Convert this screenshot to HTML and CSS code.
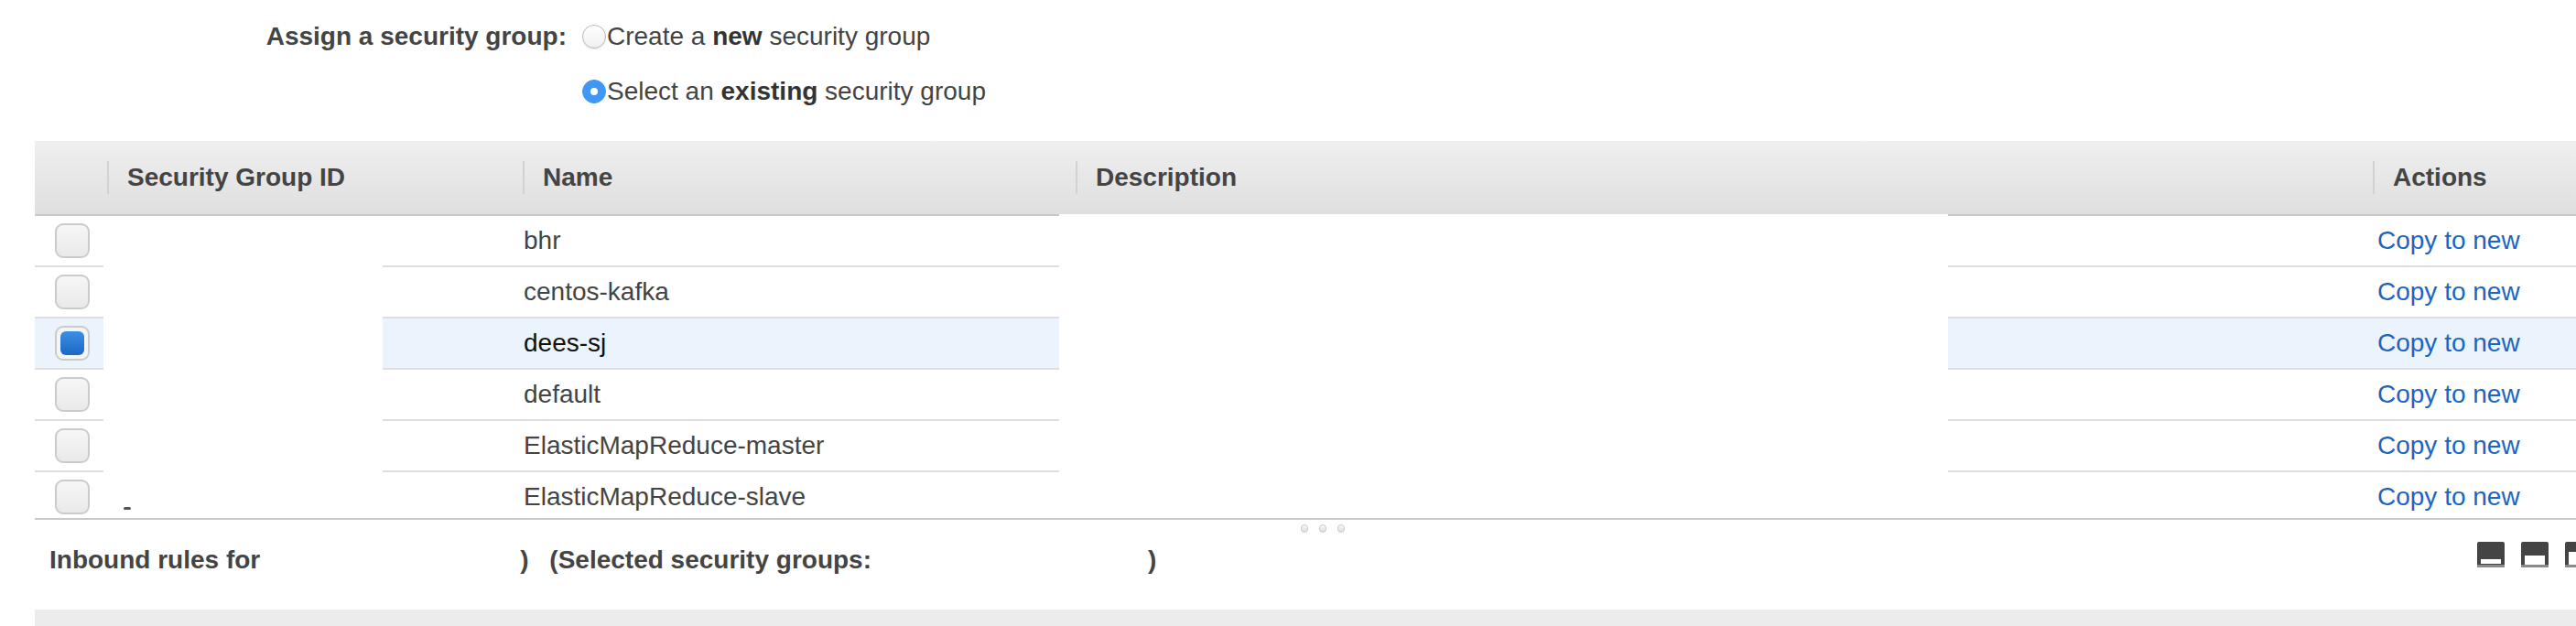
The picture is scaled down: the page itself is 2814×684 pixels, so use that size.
FILE: index.html
```html
<!DOCTYPE html>
<html lang="en">
<head>
<meta charset="utf-8">
<title>Configure Security Group</title>
<link rel="stylesheet" href="styles.css">
</head>
<body>
<div class="page">
  <div class="assign">
    <div class="assign-label">Assign a security group:</div>
    <div class="assign-options">
      <label class="radio-row"><span class="radio"></span><span class="radio-text">Create a <b>new</b> security group</span></label>
      <label class="radio-row"><span class="radio checked"></span><span class="radio-text">Select an <b>existing</b> security group</span></label>
    </div>
  </div>

  <div class="sg-table">
    <div class="thead">
      <div class="th"></div>
      <div class="th"><span class="th-label">Security Group ID</span></div>
      <div class="th"><span class="th-label">Name</span></div>
      <div class="th"><span class="th-label">Description</span></div>
      <div class="th"><span class="th-label">Actions</span></div>
    </div>
    <div class="tbody">
      <div class="tr">
        <div class="td td-check"><span class="cb"></span></div>
        <div class="td"></div>
        <div class="td td-name">bhr</div>
        <div class="td"></div>
        <div class="td td-action"><a class="link">Copy to new</a></div>
      </div>
      <div class="tr">
        <div class="td td-check"><span class="cb"></span></div>
        <div class="td"></div>
        <div class="td td-name">centos-kafka</div>
        <div class="td"></div>
        <div class="td td-action"><a class="link">Copy to new</a></div>
      </div>
      <div class="tr selected">
        <div class="td td-check"><span class="cb checked"></span></div>
        <div class="td"></div>
        <div class="td td-name">dees-sj</div>
        <div class="td"></div>
        <div class="td td-action"><a class="link">Copy to new</a></div>
      </div>
      <div class="tr">
        <div class="td td-check"><span class="cb"></span></div>
        <div class="td"></div>
        <div class="td td-name">default</div>
        <div class="td"></div>
        <div class="td td-action"><a class="link">Copy to new</a></div>
      </div>
      <div class="tr">
        <div class="td td-check"><span class="cb"></span></div>
        <div class="td"></div>
        <div class="td td-name">ElasticMapReduce-master</div>
        <div class="td"></div>
        <div class="td td-action"><a class="link">Copy to new</a></div>
      </div>
      <div class="tr">
        <div class="td td-check"><span class="cb"></span></div>
        <div class="td"></div>
        <div class="td td-name">ElasticMapReduce-slave</div>
        <div class="td"></div>
        <div class="td td-action"><a class="link">Copy to new</a></div>
      </div>
    </div>
    <div class="redact redact-id"><span class="stub"></span></div>
    <div class="redact redact-desc"></div>
  </div>

  <div class="splitter">
    <span class="grip"></span><span class="grip"></span><span class="grip"></span>
  </div>

  <div class="rules-bar">
    <h3 class="rules-title">Inbound rules for<span class="gap gap-1"></span><span class="frag">)</span> (Selected security groups:<span class="gap gap-2"></span>)</h3>
    <div class="panel-icons">
      <svg class="picon" width="30" height="28" viewBox="0 0 30 28"><rect width="30" height="28" rx="2" fill="#444"/><rect x="4" y="19" width="22" height="5" fill="#fff"/><rect x="0" y="25" width="30" height="3" fill="#8a8a8a"/></svg>
      <svg class="picon" width="30" height="28" viewBox="0 0 30 28"><rect width="30" height="28" rx="2" fill="#444"/><rect x="4" y="15" width="22" height="10" fill="#fff"/><rect x="0" y="25" width="30" height="3" fill="#8a8a8a"/></svg>
      <svg class="picon" width="30" height="28" viewBox="0 0 30 28"><rect width="30" height="28" rx="2" fill="#444"/><rect x="4" y="11" width="22" height="14" fill="#fff"/><rect x="0" y="25" width="30" height="3" fill="#8a8a8a"/></svg>
    </div>
  </div>
  <div class="rules-band"></div>
</div>
</body>
</html>
```

FILE: styles.css
```css
html, body {
  margin: 0;
  padding: 0;
  overflow: hidden;
  background: #fff;
}

body {
  font-family: "Liberation Sans", Arial, Helvetica, sans-serif;
  font-size: 28px;
  color: #444;
}

.page {
  width: 2814px;
  margin-left: 38px;
}

/* ---------- Assign security group ---------- */
.assign {
  display: grid;
  grid-template-columns: 581px auto;
  column-gap: 17px;
  padding-top: 20px;
}

.assign-label {
  text-align: right;
  font-weight: bold;
  line-height: 40px;
  color: #444;
  white-space: nowrap;
}

.assign-options {
  display: flex;
  flex-direction: column;
  gap: 20px;
}

.radio-row {
  display: flex;
  align-items: center;
  height: 40px;
  color: #444;
  white-space: nowrap;
}

.radio-text {
  line-height: 40px;
}

.radio-text b {
  color: #333;
}

.radio {
  box-sizing: border-box;
  width: 26px;
  height: 26px;
  border-radius: 50%;
  border: 1px solid #b8b8b8;
  background: linear-gradient(#ffffff, #f0f0f0);
  box-shadow: 0 1px 1px rgba(0, 0, 0, 0.10);
  margin-right: 1px;
  flex: none;
  position: relative;
}

.radio.checked {
  border-color: #3d95f2;
  background: #3f98f5;
  box-shadow: none;
}

.radio.checked::after {
  content: "";
  position: absolute;
  left: 8px;
  top: 8px;
  width: 8px;
  height: 8px;
  border-radius: 50%;
  background: #fff;
}

/* ---------- Table ---------- */
.sg-table {
  position: relative;
  margin-top: 34px;
}

.thead,
.tr {
  display: grid;
  grid-template-columns: 79px 454px 604px 1417px 1fr;
}

.thead {
  height: 80px;
  background: linear-gradient(#efefef, #dfdfdf);
  border-bottom: 2px solid #c8c8c8;
}

.th {
  display: flex;
  align-items: center;
}

.th-label {
  display: flex;
  align-items: center;
  height: 36px;
  border-left: 2px solid #d2d2d2;
  padding-left: 20px;
  font-weight: bold;
  color: #444;
  white-space: nowrap;
}

.tbody {
  height: 330px;
  overflow: hidden;
  border-bottom: 2px solid #c9c9c9;
}

.tr {
  height: 54px;
  border-bottom: 2px solid #dedede;
}

.tr.selected {
  background: #ebf3fd;
}

.td {
  display: flex;
  align-items: center;
  white-space: nowrap;
}

.td-check {
  padding-left: 22px;
}

.td-name {
  padding-left: 1px;
  color: #444;
}

.tr.selected .td-name {
  color: #111;
}

.td-action {
  padding-left: 5px;
}

.link {
  color: #1a66c3;
  text-decoration: none;
}

.cb {
  box-sizing: border-box;
  width: 38px;
  height: 38px;
  border-radius: 9px;
  border: 2px solid #cbcbcb;
  background: linear-gradient(#f6f6f6, #e9e9e9);
  position: relative;
}

.cb.checked {
  background: #f5f5f5;
}

.cb.checked::after {
  content: "";
  position: absolute;
  left: 4px;
  top: 4px;
  right: 4px;
  bottom: 4px;
  border-radius: 6px;
  background: linear-gradient(#3c8fe2, #1b68c6);
}

/* redaction boxes painted over the table */
.redact {
  position: absolute;
  background: #fff;
}

.redact-id {
  left: 75px;
  top: 82px;
  width: 305px;
  height: 330px;
}

.redact-desc {
  left: 1119px;
  top: 80px;
  width: 971px;
  height: 332px;
}

.stub {
  position: absolute;
  left: 22px;
  top: 318px;
  width: 8px;
  height: 3px;
  border-radius: 2px;
  background: #555;
}

/* ---------- Inbound rules pane ---------- */
.splitter {
  height: 14px;
  display: flex;
  justify-content: center;
  align-items: flex-start;
  gap: 12px;
}

.grip {
  box-sizing: border-box;
  width: 8px;
  height: 9px;
  margin-top: 5px;
  border-radius: 4px;
  border: 1px solid #c8c8c8;
  background: linear-gradient(#fbfbfb, #dcdcdc);
}

.rules-bar {
  height: 84px;
  box-sizing: border-box;
  padding: 10px 20px 0 16px;
  display: flex;
  justify-content: space-between;
  align-items: flex-start;
}

.rules-title {
  margin: 0;
  font-size: 28px;
  font-weight: bold;
  line-height: 40px;
  color: #444;
  white-space: nowrap;
}

.gap {
  display: inline-block;
  height: 1px;
}

.gap-1 {
  width: 284px;
}

.frag {
  display: inline-block;
  margin-right: 15px;
}

.gap-2 {
  width: 302px;
}

.panel-icons {
  display: flex;
  gap: 18px;
}

.picon {
  display: block;
}

.rules-band {
  height: 18px;
  background: #ececec;
}
```
